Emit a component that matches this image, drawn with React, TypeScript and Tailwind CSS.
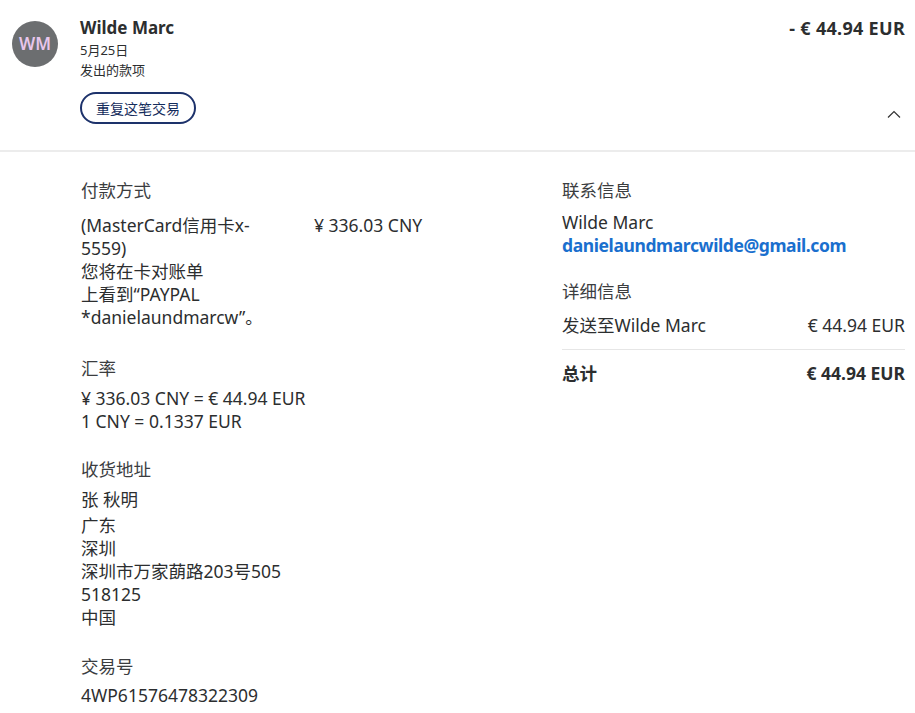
import React from 'react';

const font = { fontFamily: '"Noto Sans", "Noto Sans CJK SC", sans-serif' };

function ChevronUp() {
  return (
    <svg width="14" height="8" viewBox="0 0 14 8" fill="none" className="text-[#333]">
      <path d="M1 7.5L7 1.5L13 7.5" stroke="currentColor" strokeWidth="1.2" />
    </svg>
  );
}

function Heading({ children }: { children: React.ReactNode }) {
  return <div className="text-[17.5px] leading-[24px] text-[#3b3d3f]">{children}</div>;
}

export default function App() {
  return (
    <div className="min-h-[713px] w-[915px] bg-white text-[#2c2e2f]" style={font}>
      {/* header */}
      <div className="flex border-b-2 border-[#ececec] pb-[26px] pl-3 pr-[10px] pt-[17px]">
        <div className="mt-[4px] flex h-[46px] w-[46px] shrink-0 items-center justify-center rounded-full bg-[#6c6e70] text-[17px] font-semibold text-[#e8c6ec]">
          WM
        </div>
        <div className="ml-[22px] flex flex-col">
          <div className="text-[17px] font-bold leading-[22px]">Wilde Marc</div>
          <div className="mt-[1px] text-[13px] leading-[20px]">5月25日</div>
          <div className="text-[13px] leading-[20px]">发出的款项</div>
          <button
            type="button"
            className="mt-[12px] h-[32px] w-[116px] rounded-full border-2 border-[#1d326b] text-[14px] text-[#142c5c]"
          >
            重复这笔交易
          </button>
        </div>
        <div className="ml-auto flex flex-col items-end justify-between">
          <div className="text-[18px] font-bold leading-[22px] tracking-[0.3px]">- € 44.94 EUR</div>
          <div className="mb-[6px] mr-[4px]">
            <ChevronUp />
          </div>
        </div>
      </div>

      {/* details */}
      <div className="grid grid-cols-[481px_343px] pl-[81px] pt-[26px] text-[17.5px]">
        <div className="flex flex-col">
          <Heading>付款方式</Heading>
          <div className="mt-[12px] flex leading-[23px]">
            <div className="w-[233px]">
              <div>(MasterCard信用卡x-</div>
              <div>5559)</div>
              <div>您将在卡对账单</div>
              <div>上看到“PAYPAL</div>
              <div>*danielaundmarcw”。</div>
            </div>
            <div>¥ 336.03 CNY</div>
          </div>

          <div className="mt-[27px]">
            <Heading>汇率</Heading>
          </div>
          <div className="mt-[7px] leading-[23px]">
            <div>¥ 336.03 CNY = € 44.94 EUR</div>
            <div>1 CNY = 0.1337 EUR</div>
          </div>

          <div className="mt-[24px]">
            <Heading>收货地址</Heading>
          </div>
          <div className="mt-[7px] leading-[23px]">
            <div>张 秋明</div>
            <div className="mt-[3px]">
              <div>广东</div>
              <div>深圳</div>
              <div>深圳市万家蓢路203号505</div>
              <div>518125</div>
              <div>中国</div>
            </div>
          </div>

          <div className="mt-[25px]">
            <Heading>交易号</Heading>
          </div>
          <div className="mt-[6px] leading-[23px]">4WP61576478322309</div>
        </div>

        <div className="flex flex-col">
          <Heading>联系信息</Heading>
          <div className="mt-[9px] leading-[23px]">
            <div>Wilde Marc</div>
            <div className="font-bold tracking-[-0.4px] text-[#1a6fce]">danielaundmarcwilde@gmail.com</div>
          </div>

          <div className="mt-[22px]">
            <Heading>详细信息</Heading>
          </div>
          <div className="mt-[11px] flex justify-between border-b border-[#e6e6e6] pb-[12px] leading-[23px]">
            <div>发送至Wilde Marc</div>
            <div>€ 44.94 EUR</div>
          </div>
          <div className="flex justify-between pt-[12px] font-bold leading-[23px]">
            <div>总计</div>
            <div>€ 44.94 EUR</div>
          </div>
        </div>
      </div>
    </div>
  );
}
